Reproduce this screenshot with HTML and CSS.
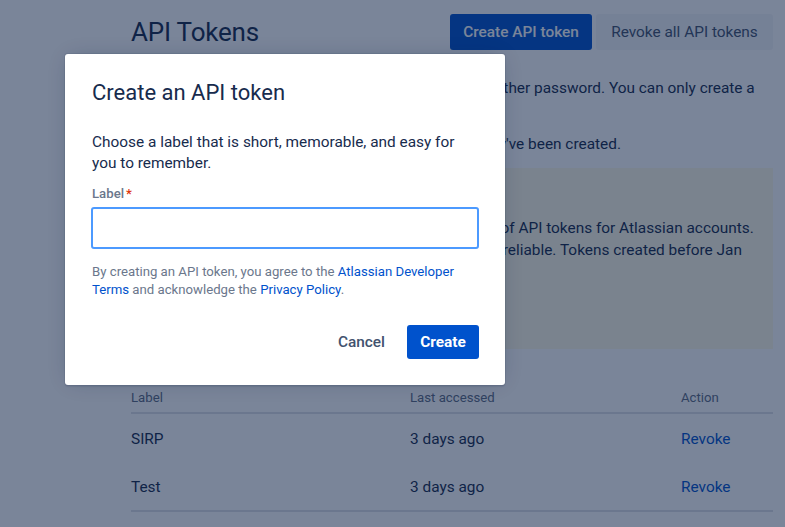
FILE: index.html
```html
<!DOCTYPE html>
<html lang="en">
<head>
<meta charset="utf-8">
<title>API Tokens</title>
<link rel="stylesheet" href="styles.css">
</head>
<body>
<div class="page">
  <header class="page-head">
    <h1 class="page-title">API Tokens</h1>
    <div class="head-actions">
      <button class="btn btn-primary">Create API token</button>
      <button class="btn btn-subtle">Revoke all API tokens</button>
    </div>
  </header>
  <p class="desc">Protect API tokens in your servers as securely as any other password. You can only create a token for your own account.</p>
  <p class="desc">For safety reasons, you can't see your tokens once they've been created.</p>
  <section class="notice">
    <h2 class="notice-title">Token expiry</h2>
    <p class="notice-text">We're doing some changes to the default expiration of API tokens for Atlassian accounts. These updates will keep all tokens more secure and reliable. Tokens created before Jan 2025 will expire soon.</p>
  </section>
  <div class="table">
    <div class="row row-head">
      <div class="cell">Label</div>
      <div class="cell">Last accessed</div>
      <div class="cell">Action</div>
    </div>
    <div class="row">
      <div class="cell">SIRP</div>
      <div class="cell">3 days ago</div>
      <div class="cell"><a class="link-action">Revoke</a></div>
    </div>
    <div class="row row-last">
      <div class="cell">Test</div>
      <div class="cell">3 days ago</div>
      <div class="cell"><a class="link-action">Revoke</a></div>
    </div>
  </div>
</div>

<div class="blanket"></div>

<div class="modal" role="dialog">
  <h2 class="modal-title">Create an API token</h2>
  <p class="modal-text">Choose a label that is short, memorable, and easy for you to remember.</p>
  <label class="field-label">Label<span class="req">*</span></label>
  <input class="field-input" type="text">
  <p class="terms">By creating an API token, you agree to the <a class="link">Atlassian Developer Terms</a> and acknowledge the <a class="link">Privacy Policy</a>.</p>
  <div class="modal-foot">
    <button class="btn btn-cancel">Cancel</button>
    <button class="btn btn-create">Create</button>
  </div>
</div>
</body>
</html>
```

FILE: styles.css
```css
* { box-sizing: border-box; }
html, body { margin: 0; padding: 0; }
body {
  width: 785px;
  height: 527px;
  overflow: hidden;
  background: #ffffff;
  color: #172B4D;
  font-family: Roboto, "Noto Sans", "Liberation Sans", sans-serif;
  font-size: 15.4px;
  position: relative;
}
.page {
  padding: 14px 12px 0 131px;
}
.page-head {
  display: flex;
  justify-content: space-between;
  align-items: center;
  height: 36px;
}
.page-title {
  margin: 0;
  font-size: 26px;
  font-weight: 400;
  color: #172B4D;
  letter-spacing: -0.2px;
}
.head-actions {
  display: flex;
  gap: 4px;
}
.btn {
  font-family: inherit;
  border: 0;
  border-radius: 3px;
  cursor: pointer;
}
.btn-primary {
  height: 36px;
  width: 142px;
  background: #0052CC;
  color: #ffffff;
  font-size: 15.4px;
  font-weight: 500;
}
.btn-subtle {
  height: 36px;
  width: 177px;
  background: rgba(9, 30, 66, 0.04);
  color: #42526E;
  font-size: 15.4px;
}
.desc {
  margin: 0;
  font-size: 15.4px;
  line-height: 22px;
  color: #172B4D;
}
.desc:first-of-type { margin-top: 27px; }
.desc + .desc { margin-top: 12px; }
.notice {
  margin-top: 13px;
  height: 181px;
  background: #FFFAE6;
  padding: 20px 0 20px 16px;
}
.notice-title {
  margin: 0;
  font-size: 15.4px;
  font-weight: 600;
  line-height: 22px;
}
.notice-text {
  margin: 7px 0 0;
  font-size: 15.4px;
  line-height: 22px;
}
.table {
  margin-top: 41px;
}
.row {
  display: grid;
  grid-template-columns: 279px 271px 1fr;
  align-items: center;
  height: 49px;
  font-size: 15.4px;
}
.row-head {
  height: 24px;
  line-height: 16px;
  font-size: 13.2px;
  color: #5E6C84;
  border-bottom: 2px solid #DFE1E6;
  align-items: start;
}
.row-last { height: 49px; border-bottom: 2px solid #DFE1E6; }
.link-action { color: #0052CC; }

.blanket {
  position: absolute;
  inset: 0;
  background: rgba(9, 30, 66, 0.54);
}

.modal {
  position: absolute;
  left: 65px;
  top: 54px;
  width: 440px;
  height: 331px;
  background: #ffffff;
  border-radius: 3px;
  box-shadow: 0 0 0 1px rgba(9,30,66,0.08), 0 2px 1px rgba(9,30,66,0.08), 0 0 20px -6px rgba(9,30,66,0.31);
  padding: 25px 26px 26px 27px;
  display: flex;
  flex-direction: column;
}
.modal-title {
  margin: 0;
  font-size: 22px;
  font-weight: 400;
  line-height: 28px;
  color: #172B4D;
}
.modal-text {
  margin: 25px 0 0;
  font-size: 15.4px;
  line-height: 21px;
  color: #172B4D;
}
.field-label {
  margin-top: 12px;
  display: block;
  font-size: 13.2px;
  line-height: 16px;
  font-weight: 500;
  color: #6B778C;
}
.req {
  color: #DE350B;
  margin-left: 2px;
}
.field-input {
  margin: 5px 0 0 -1px;
  width: 388px;
  height: 42px;
  border: 2px solid #4C9AFF;
  border-radius: 3px;
  background: #ffffff;
  outline: none;
  font-family: inherit;
  font-size: 14px;
}
.terms {
  margin: 14px 0 0;
  font-size: 13.2px;
  line-height: 18px;
  color: #6B778C;
}
.link { color: #0052CC; }
.modal-foot {
  margin-top: 26px;
  display: flex;
  justify-content: flex-end;
  align-items: center;
  gap: 8px;
}
.btn-cancel {
  height: 34px;
  padding: 0 14px;
  background: transparent;
  color: #42526E;
  font-size: 15.4px;
  font-weight: 500;
}
.btn-create {
  height: 34px;
  width: 72px;
  background: #0052CC;
  color: #ffffff;
  font-size: 15.4px;
  font-weight: 700;
}
```
